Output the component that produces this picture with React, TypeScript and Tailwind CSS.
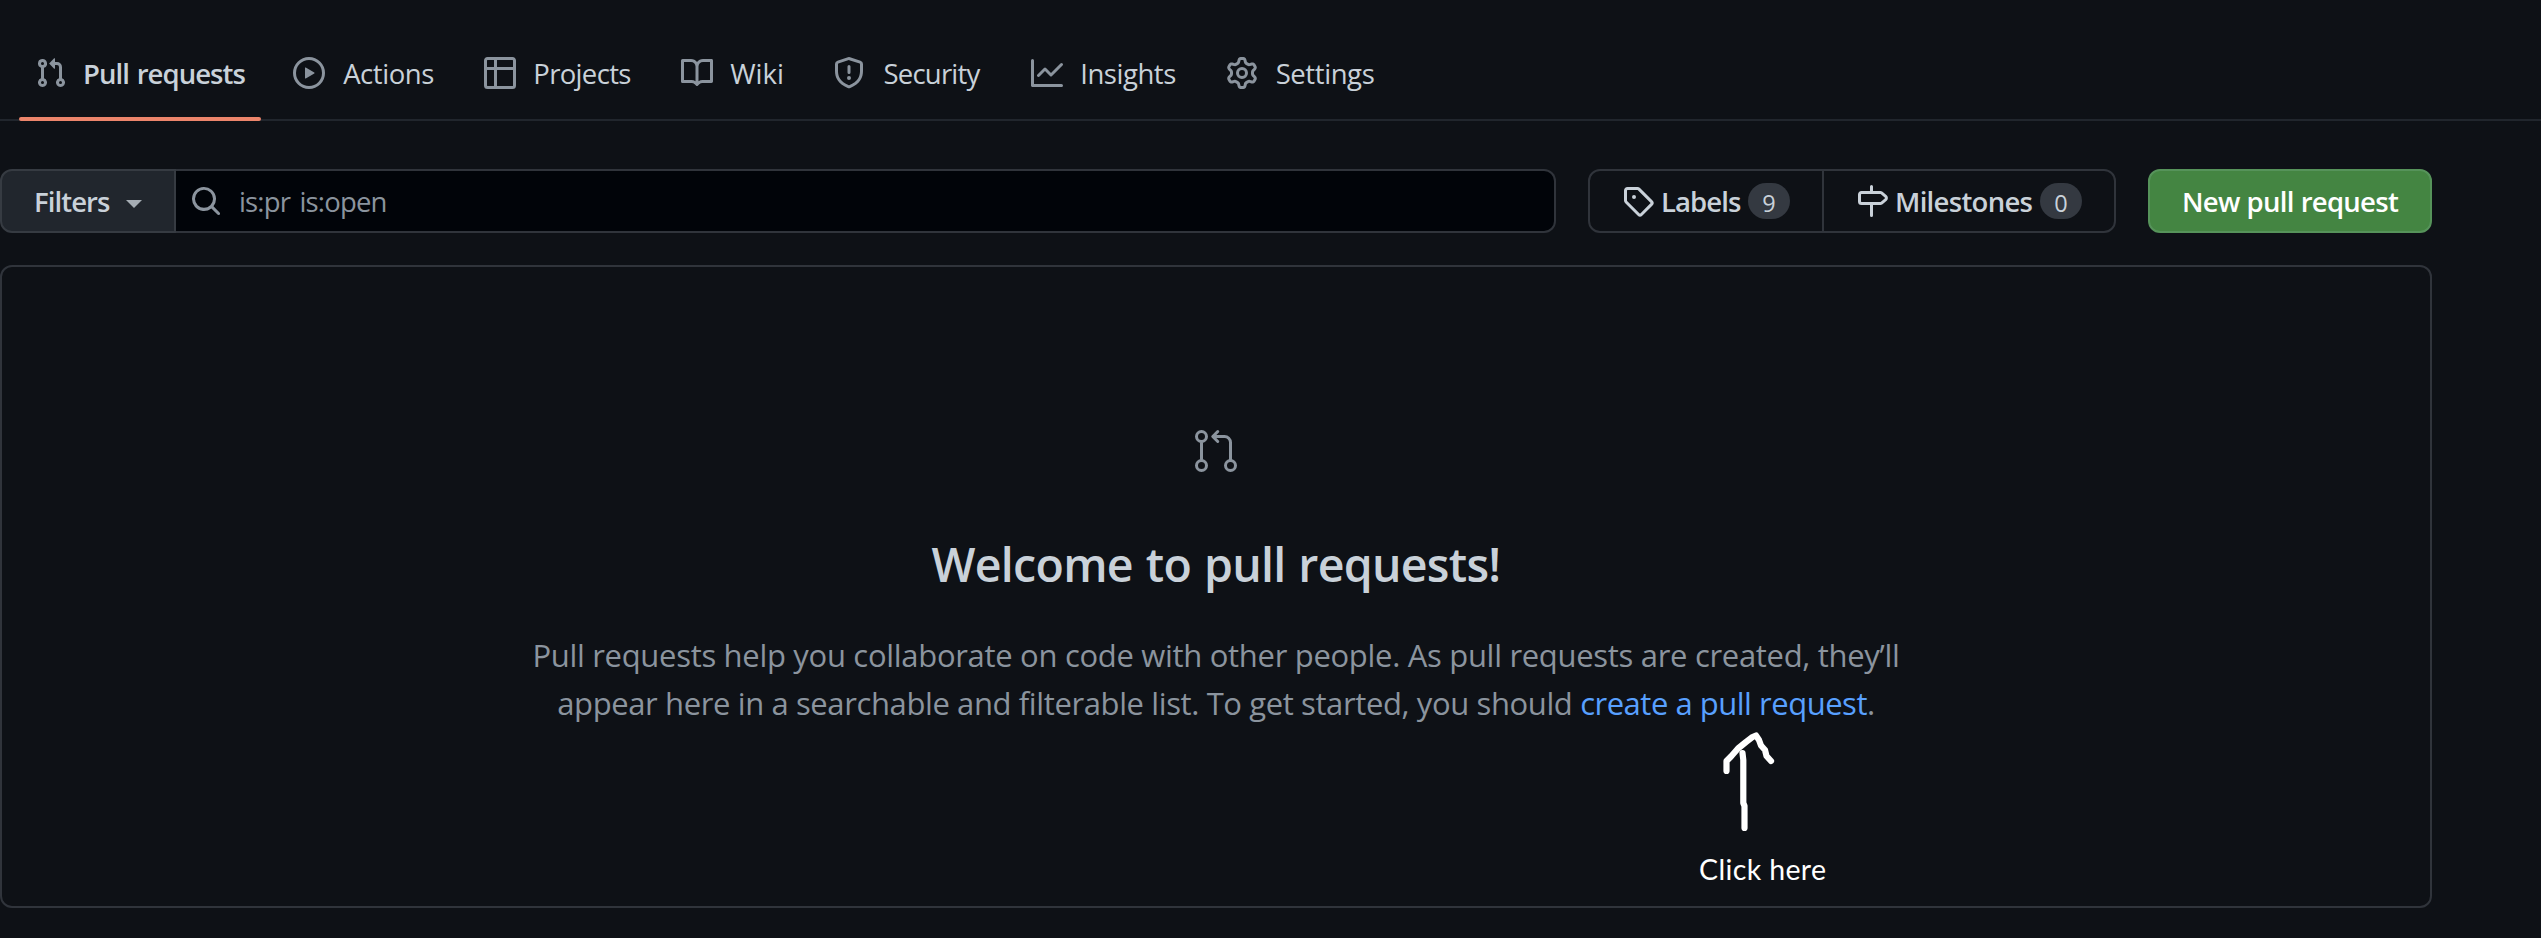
import type { ReactNode } from "react";

const icons = {
  pullRequest:
    "M7.177 3.073L9.573.677A.25.25 0 0110 .854v4.792a.25.25 0 01-.427.177L7.177 3.427a.25.25 0 010-.354zM3.75 2.5a.75.75 0 100 1.5.75.75 0 000-1.5zm-2.25.75a2.25 2.25 0 113 2.122v5.256a2.251 2.251 0 11-1.5 0V5.372A2.25 2.25 0 011.5 3.25zM11 2.5h-1V4h1a1 1 0 011 1v5.628a2.251 2.251 0 101.5 0V5A2.5 2.5 0 0011 2.5zm1 10.25a.75.75 0 111.5 0 .75.75 0 01-1.5 0zM3.75 12a.75.75 0 100 1.5.75.75 0 000-1.5z",
  play: "M1.5 8a6.5 6.5 0 1113 0 6.5 6.5 0 01-13 0zM8 0a8 8 0 100 16A8 8 0 008 0zM6.379 5.227A.25.25 0 006 5.442v5.117a.25.25 0 00.379.214l4.264-2.559a.25.25 0 000-.428L6.379 5.227z",
  table:
    "M0 1.75C0 .784.784 0 1.75 0h12.5C15.216 0 16 .784 16 1.75v12.5A1.75 1.75 0 0 1 14.25 16H1.75A1.75 1.75 0 0 1 0 14.25ZM6.5 6.5v8h7.75a.25.25 0 0 0 .25-.25V6.5Zm8-1.5V1.75a.25.25 0 0 0-.25-.25H6.5V5Zm-13 1.5v7.75c0 .138.112.25.25.25H5v-8ZM5 5V1.5H1.75a.25.25 0 0 0-.25.25V5Z",
  book: "M0 1.75A.75.75 0 01.75 1h4.253c1.227 0 2.317.59 3 1.501A3.744 3.744 0 0111.006 1h4.245a.75.75 0 01.75.75v10.5a.75.75 0 01-.75.75h-4.507a2.25 2.25 0 00-1.591.659l-.622.621a.75.75 0 01-1.06 0l-.622-.621A2.25 2.25 0 005.258 13H.75a.75.75 0 01-.75-.75V1.75zm8.755 3a2.25 2.25 0 012.25-2.25H14.5v9h-3.757c-.71 0-1.4.201-1.992.572l.004-7.322zm-1.504 7.324l.004-5.073-.002-2.253A2.25 2.25 0 005.003 2.5H1.5v9h3.757a3.75 3.75 0 011.994.574z",
  shield:
    "M7.467.133a1.75 1.75 0 011.066 0l5.25 1.68A1.75 1.75 0 0115 3.48V7c0 1.566-.32 3.182-1.303 4.682-.983 1.498-2.585 2.813-5.032 3.855a1.7 1.7 0 01-1.33 0c-2.447-1.042-4.049-2.357-5.032-3.855C1.32 10.182 1 8.566 1 7V3.48a1.75 1.75 0 011.217-1.667l5.25-1.68zm.61 1.429a.25.25 0 00-.153 0l-5.25 1.68a.25.25 0 00-.174.238V7c0 1.358.275 2.666 1.057 3.86.784 1.194 2.121 2.34 4.366 3.297a.2.2 0 00.154 0c2.245-.956 3.582-2.104 4.366-3.298C13.225 9.666 13.5 8.36 13.5 7V3.48a.25.25 0 00-.174-.237l-5.25-1.68zM8.75 4.75a.75.75 0 00-1.5 0v3a.75.75 0 001.5 0v-3zM9 10.5a1 1 0 11-2 0 1 1 0 012 0z",
  graph:
    "M1.5 1.75a.75.75 0 00-1.5 0v12.5c0 .414.336.75.75.75h14.5a.75.75 0 000-1.5H1.5V1.75zm14.28 2.53a.75.75 0 00-1.06-1.06L10 7.94 7.53 5.47a.75.75 0 00-1.06 0L3.22 8.72a.75.75 0 001.06 1.06L7 7.06l2.47 2.47a.75.75 0 001.06 0l5.25-5.25z",
  gear: "M7.429 1.525a6.593 6.593 0 011.142 0c.036.003.108.036.137.146l.289 1.105c.147.56.55.967.997 1.189.174.086.341.183.501.29.417.278.97.423 1.53.27l1.102-.303c.11-.03.175.016.195.046.219.31.41.641.573.989.014.031.022.11-.059.19l-.815.806c-.411.406-.562.957-.53 1.456a4.588 4.588 0 010 .582c-.032.499.119 1.05.53 1.456l.815.806c.08.08.073.159.059.19a6.494 6.494 0 01-.573.99c-.02.029-.086.074-.195.045l-1.103-.303c-.559-.153-1.112-.008-1.529.27-.16.107-.327.204-.5.29-.449.222-.851.628-.998 1.189l-.289 1.105c-.029.11-.101.143-.137.146a6.613 6.613 0 01-1.142 0c-.036-.003-.108-.037-.137-.146l-.289-1.105c-.147-.56-.55-.967-.997-1.189a4.502 4.502 0 01-.501-.29c-.417-.278-.97-.423-1.53-.27l-1.102.303c-.11.03-.175-.016-.195-.046a6.492 6.492 0 01-.573-.989c-.014-.031-.022-.11.059-.19l.815-.806c.411-.406.562-.957.53-1.456a4.587 4.587 0 010-.582c.032-.499-.119-1.05-.53-1.456l-.815-.806c-.08-.08-.073-.159-.059-.19a6.44 6.44 0 01.573-.99c.02-.029.086-.075.195-.045l1.103.303c.559.153 1.112.008 1.529-.27.16-.107.327-.204.5-.29.449-.222.851-.628.998-1.189l.289-1.105c.029-.11.101-.143.137-.146zM8 0c-.236 0-.47.01-.701.03-.743.065-1.29.615-1.458 1.261l-.29 1.106c-.017.066-.078.158-.211.224a5.994 5.994 0 00-.668.386c-.123.082-.233.09-.3.071L3.27 2.776c-.644-.177-1.392.02-1.82.63a7.977 7.977 0 00-.704 1.217c-.315.675-.111 1.422.363 1.891l.815.806c.05.048.098.147.088.294a6.084 6.084 0 000 .772c.01.147-.038.246-.088.294l-.815.806c-.474.469-.678 1.216-.363 1.891.2.428.436.835.704 1.218.428.609 1.176.806 1.82.63l1.103-.303c.066-.019.176-.011.299.071.213.143.436.272.668.386.133.066.194.158.212.224l.289 1.106c.169.646.715 1.196 1.458 1.26a8.094 8.094 0 001.402 0c.743-.064 1.29-.614 1.458-1.26l.29-1.106c.017-.066.078-.158.211-.224a5.98 5.98 0 00.668-.386c.123-.082.233-.09.3-.071l1.102.302c.644.177 1.392-.02 1.82-.63.268-.382.505-.789.704-1.217.315-.675.111-1.422-.364-1.891l-.814-.806c-.05-.048-.098-.147-.088-.294a6.1 6.1 0 000-.772c-.01-.147.039-.246.088-.294l.814-.806c.475-.469.679-1.216.364-1.891a7.992 7.992 0 00-.704-1.218c-.428-.609-1.176-.806-1.82-.63l-1.103.303c-.066.019-.176.011-.299-.071a5.991 5.991 0 00-.668-.386c-.133-.066-.194-.158-.212-.224L10.16 1.29C9.99.645 9.444.095 8.701.031A8.094 8.094 0 008 0zm1.5 8a1.5 1.5 0 11-3 0 1.5 1.5 0 013 0zM11 8a3 3 0 11-6 0 3 3 0 016 0z",
  search:
    "M10.68 11.74a6 6 0 01-7.922-8.982 6 6 0 018.982 7.922l3.04 3.04a.749.749 0 01-.326 1.275.749.749 0 01-.734-.215zM11.5 7a4.499 4.499 0 10-8.997 0A4.499 4.499 0 0011.5 7z",
  tag: "M2.5 7.775V2.75a.25.25 0 01.25-.25h5.025a.25.25 0 01.177.073l6.25 6.25a.25.25 0 010 .354l-5.025 5.025a.25.25 0 01-.354 0l-6.25-6.25a.25.25 0 01-.073-.177zm-1.5 0V2.75C1 1.784 1.784 1 2.75 1h5.025c.464 0 .91.184 1.238.513l6.25 6.25a1.75 1.75 0 010 2.474l-5.026 5.026a1.75 1.75 0 01-2.474 0l-6.25-6.25A1.75 1.75 0 011 7.775zM6 5a1 1 0 100 2 1 1 0 000-2z",
  milestone:
    "M7.75 0a.75.75 0 0 1 .75.75V3h3.634c.414 0 .814.147 1.13.414l2.07 1.75a1.75 1.75 0 0 1 0 2.672l-2.07 1.75a1.75 1.75 0 0 1-1.13.414H8.5v5.25a.75.75 0 0 1-1.5 0V10H2.75A1.75 1.75 0 0 1 1 8.25v-3.5C1 3.784 1.784 3 2.75 3H7V.75A.75.75 0 0 1 7.75 0Zm4.384 8.5a.25.25 0 0 0 .161-.06l2.07-1.75a.248.248 0 0 0 0-.38l-2.07-1.75a.25.25 0 0 0-.161-.06H2.75a.25.25 0 0 0-.25.25v3.5c0 .138.112.25.25.25h9.384Z",
};

function Icon({ name, className = "" }: { name: keyof typeof icons; className?: string }) {
  return (
    <svg viewBox="0 0 16 16" className={`size-8 shrink-0 ${className}`} fill="currentColor" fillRule="evenodd" aria-hidden="true">
      <path d={icons[name]} />
    </svg>
  );
}

const tabs: { icon: keyof typeof icons; label: string; className: string; active?: boolean }[] = [
  { icon: "pullRequest", label: "Pull requests", className: "w-[162px] font-semibold tracking-[-0.95px] [word-spacing:1.5px]", active: true },
  { icon: "play", label: "Actions", className: "w-[95px] tracking-[-0.45px]" },
  { icon: "table", label: "Projects", className: "w-[101px] pr-px tracking-[-0.67px]" },
  { icon: "book", label: "Wiki", className: "w-[56px]" },
  { icon: "shield", label: "Security", className: "w-[102px] pr-px tracking-[-0.79px]" },
  { icon: "graph", label: "Insights", className: "w-[99px] pr-px tracking-[-0.456px]" },
  { icon: "gear", label: "Settings", className: "w-[103px] pr-px tracking-[-0.41px]" },
];

function Count({ children }: { children: ReactNode }) {
  return (
    <span className="flex h-9 w-[42px] items-center justify-center rounded-full bg-[#343941] pt-[3px] text-[23.5px] font-medium">
      {children}
    </span>
  );
}

export default function App() {
  return (
    <div className="h-[938px] w-full overflow-hidden bg-[#0e1116] font-['Open_Sans',sans-serif] text-[27.5px] leading-[42px] text-[#c9d1d9]">
      <nav className="flex h-[121px] gap-4 border-b-2 border-[#21262d] pl-[19px]">
        {tabs.map((t) => (
          <a key={t.label} className="relative flex h-[119px] items-center gap-4 px-4 pt-[27px]">
            <Icon name={t.icon} className="text-[#8b949e]" />
            <span className={`pt-0.5 text-center whitespace-nowrap ${t.className}`}>{t.label}</span>
            {t.active && <span className="absolute inset-x-0 -bottom-0.5 h-1 rounded-full bg-[#ec856b]" />}
          </a>
        ))}
      </nav>

      <main className="w-[2432px] pt-12">
        <div className="flex h-16">
          <button className="flex w-[176px] items-center rounded-l-xl border-2 border-[#363b42] bg-[#21262d] pl-8 font-semibold">
            <span className="w-[76px] pt-0.5 text-left tracking-[-0.93px]">Filters</span>
            <svg viewBox="0 0 16 8" className="mt-1.5 ml-4 h-2 w-4" fill="#a6adb4" aria-hidden="true">
              <path d="M0 0h16L8 8z" />
            </svg>
          </button>
          <div className="flex w-[1380px] items-center rounded-r-xl border-2 border-l-0 border-[#30343b] bg-[#010409] pl-3.5 text-[#8b949e]">
            <Icon name="search" />
            <span className="ml-[17px] pt-0.5 tracking-[-0.84px] [word-spacing:3px]">is:pr is:open</span>
          </div>

          <div className="ml-8 flex w-[528px] rounded-xl border-2 border-[#30343b] font-semibold">
            <a className="flex w-[234px] items-center border-r-2 border-[#30343b] pl-8">
              <Icon name="tag" />
              <span className="ml-[7px] w-[87px] pt-0.5 tracking-[-0.906px]">Labels</span>
              <Count>9</Count>
            </a>
            <a className="flex items-center pl-8">
              <Icon name="milestone" />
              <span className="ml-[7px] w-[145px] pt-0.5 tracking-[-0.7px]">Milestones</span>
              <Count>0</Count>
            </a>
          </div>

          <button className="ml-8 flex w-[284px] items-center justify-center rounded-xl border-2 border-[#56935a] bg-[#448542] pt-0.5 font-semibold tracking-[-0.72px] [word-spacing:0.6px] text-white">
            New pull request
          </button>
        </div>

        <section className="relative mt-8 flex h-[643px] flex-col items-center rounded-xl border-2 border-[#30343b] pt-[160px]">
          <svg viewBox="0 0 24 24" className="size-12 shrink-0 text-[#8b949e]" fill="currentColor" fillRule="evenodd" aria-hidden="true">
            <path d="M16 19.25a3.25 3.25 0 1 1 6.5 0 3.25 3.25 0 0 1-6.5 0Zm-14.5 0a3.25 3.25 0 1 1 6.5 0 3.25 3.25 0 0 1-6.5 0Zm0-14.5a3.25 3.25 0 1 1 6.5 0 3.25 3.25 0 0 1-6.5 0ZM4.75 3a1.75 1.75 0 1 0 .001 3.501A1.75 1.75 0 0 0 4.75 3Zm0 14.5a1.75 1.75 0 1 0 .001 3.501A1.75 1.75 0 0 0 4.75 17.5Zm14.5 0a1.75 1.75 0 1 0 .001 3.501 1.75 1.75 0 0 0-.001-3.501Z" />
            <path d="M13.405 1.72a.75.75 0 0 1 0 1.06L12.185 4h4.065A3.75 3.75 0 0 1 20 7.75v8.75a.75.75 0 0 1-1.5 0V7.75a2.25 2.25 0 0 0-2.25-2.25h-4.064l1.22 1.22a.75.75 0 0 1-1.061 1.06l-2.5-2.5a.75.75 0 0 1 0-1.06l2.5-2.5a.75.75 0 0 1 1.06 0ZM4.75 7.25A.75.75 0 0 1 5.5 8v8A.75.75 0 0 1 4 16V8a.75.75 0 0 1 .75-.75Z" />
          </svg>
          <h3 className="mt-[53px] text-[46.5px] leading-[72px] font-semibold tracking-[-0.72px] [word-spacing:1.5px]">
            Welcome to pull requests!
          </h3>
          <p className="mt-[31px] text-center text-[31px] leading-[48px] whitespace-nowrap text-[#8b949e]">
            <span className="block tracking-[-0.305px]">
              Pull requests help you collaborate on code with other people. As pull requests are created, they’ll
            </span>
            <span className="block tracking-[-0.385px]">
              appear here in a searchable and filterable list. To get started, you should{" "}
              <a className="tracking-[-0.48px] text-[#58a0ff]">create a pull request</a>.
            </span>
          </p>

          <svg viewBox="0 0 60 104" className="absolute top-[463px] left-[1718px] h-[104px] w-[60px]" fill="none" stroke="#fff" strokeWidth="6.2" strokeLinecap="round" strokeLinejoin="round" aria-hidden="true">
            <path d="M6.5 41V31l4.5-4.500 7-8 8-6.500 6.500-5 3.500-1.500 3 4.500 2 5.500 4 4.500 1.500 6 4.500 5" />
            <path d="M22.500 23l.8 7v43l1.200 3v22" />
          </svg>
          <span className="absolute top-[581px] left-[1697px] font-['Lato',sans-serif] text-[28.5px] tracking-[0.364px] text-white">
            Click here
          </span>
        </section>
      </main>
    </div>
  );
}
